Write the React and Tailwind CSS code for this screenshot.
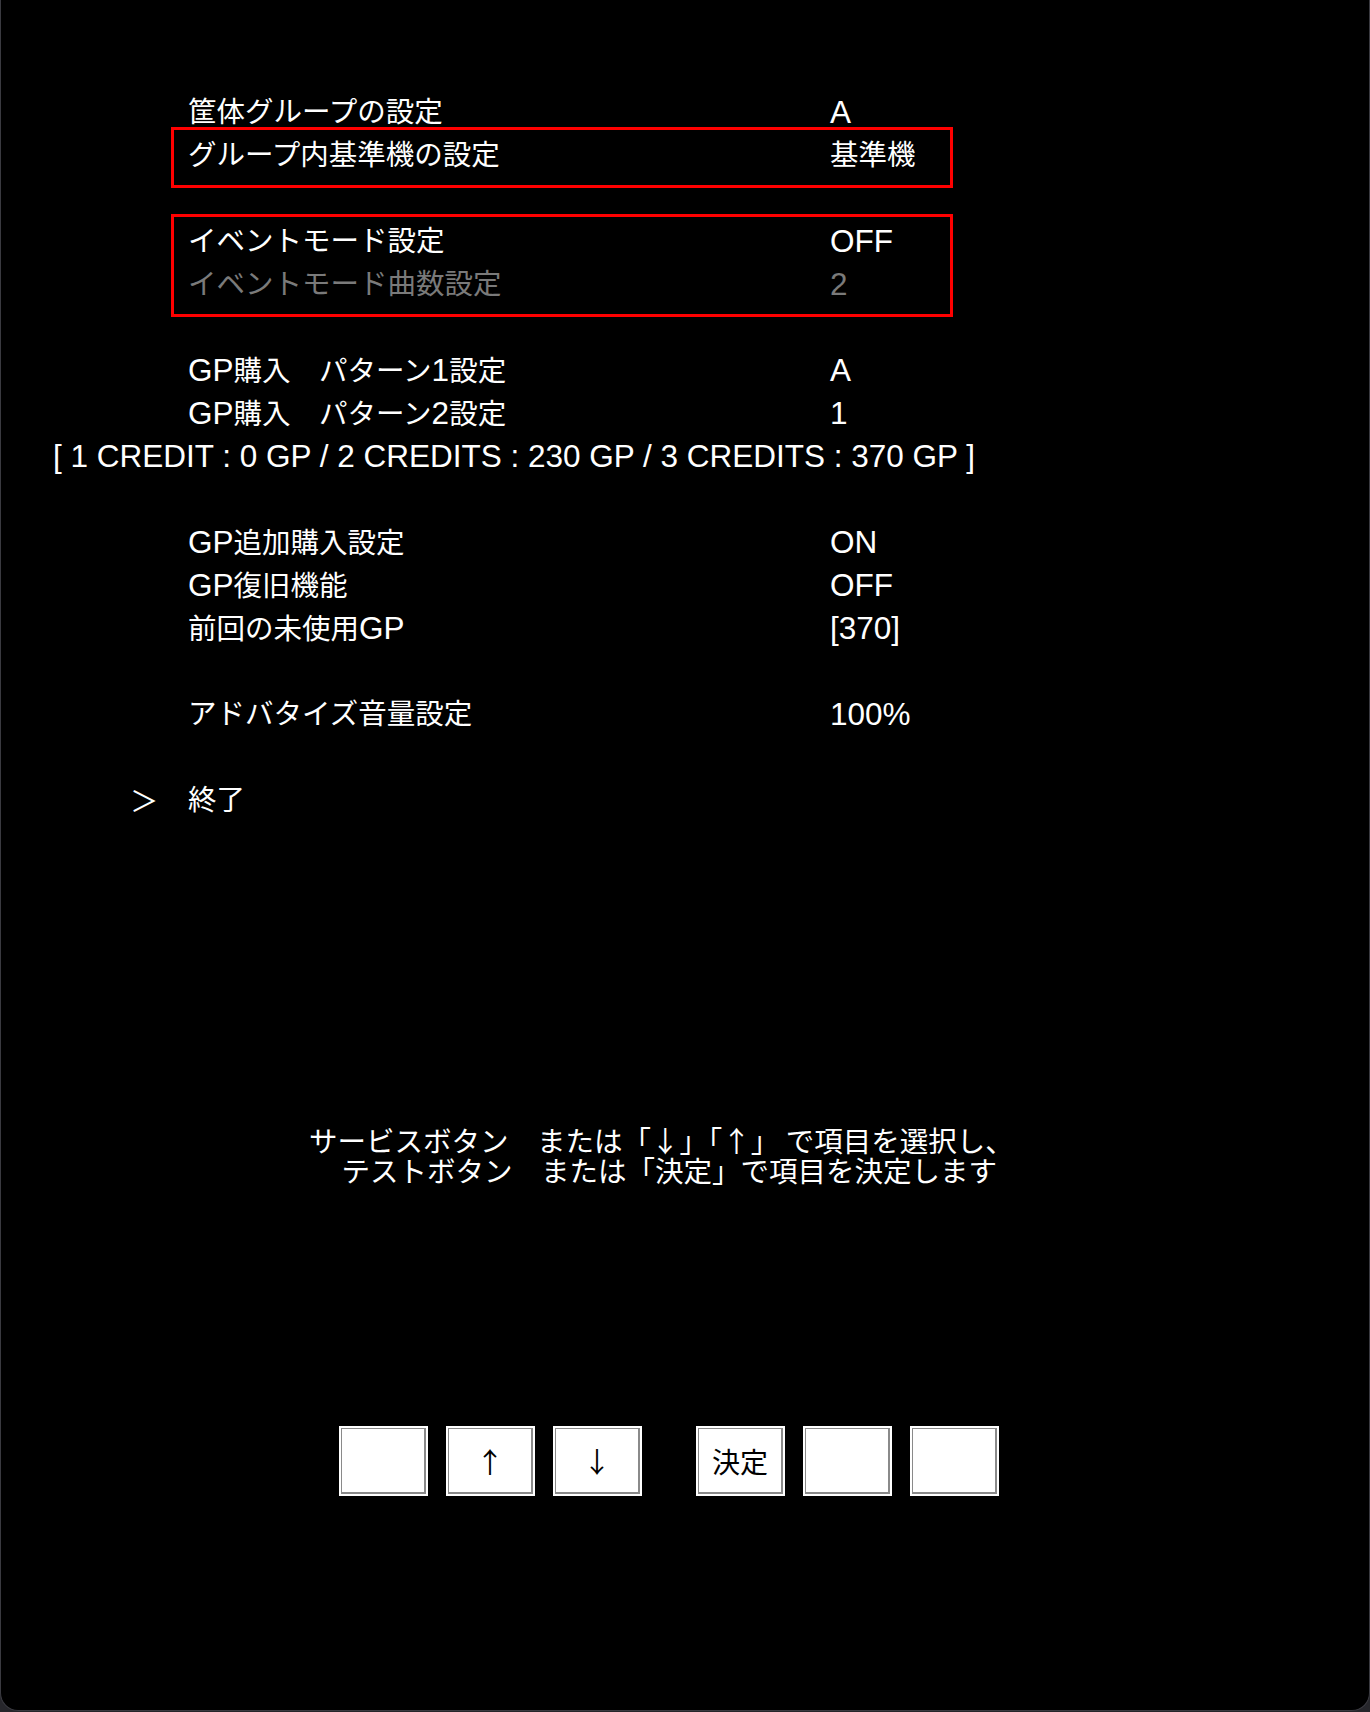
import React from "react";

const FONT = { fontFamily: '"Liberation Sans", "Noto Sans CJK JP", sans-serif' };
const CJK = { fontFamily: '"Noto Sans CJK JP", "Liberation Sans", sans-serif' };

function Mixed({ text }) {
  const parts = text.split(/([\x20-\x7e]+)/).filter((p) => p.length > 0);
  return parts.map((p, i) =>
    /^[\x20-\x7e]+$/.test(p) ? (
      <span key={i} className="text-[31.5px]">
        {p}
      </span>
    ) : (
      <span key={i}>{p}</span>
    )
  );
}

function Row({ label, value, dim }) {
  return (
    <div className={`flex h-[43px] items-center ${dim ? "text-[#7a7a7a]" : "text-white"}`}>
      <div className="w-[829px] pl-[187px] whitespace-pre">
        <Mixed text={label} />
      </div>
      <div className="whitespace-pre">
        <Mixed text={value} />
      </div>
    </div>
  );
}

function Blank() {
  return <div className="h-[43px]" />;
}

function Boxed({ children, top, bottom }) {
  return (
    <div className="relative">
      <div
        className={`pointer-events-none absolute left-[170px] w-[782px] border-[3px] border-[#ff0000] ${top} ${bottom}`}
      />
      {children}
    </div>
  );
}

function Key({ children, extra = "" }) {
  return (
    <div className={`h-[70px] w-[89px] bg-white p-[2px] ${extra}`}>
      <div
        className="flex h-full w-full items-center justify-center border border-[#8a8a8a] border-b-2 border-r-2 text-[28px] text-black"
        style={CJK}
      >
        {children}
      </div>
    </div>
  );
}

export default function App() {
  return (
    <div className="h-[1712px] w-[1370px] bg-[#26262b]" style={FONT}>
      <div className="h-[1711px] w-full overflow-hidden rounded-b-[18px] border-x border-b border-[#3a3a40] bg-black text-[28.5px] leading-none">
        <div className="pt-[91px]">
          <Row label="筐体グループの設定" value="A" />
          <Boxed top="-top-[7px]" bottom="-bottom-[11px]">
            <Row label="グループ内基準機の設定" value="基準機" />
          </Boxed>
          <Blank />
          <Boxed top="-top-[6px]" bottom="-bottom-[11px]">
            <Row label="イベントモード設定" value="OFF" />
            <Row label="イベントモード曲数設定" value="2" dim />
          </Boxed>
          <Blank />
          <Row label="GP購入　パターン1設定" value="A" />
          <Row label="GP購入　パターン2設定" value="1" />
          <div className="flex h-[43px] items-center pl-[52px] text-[31.5px] text-white whitespace-pre">
            [ 1 CREDIT : 0 GP / 2 CREDITS : 230 GP / 3 CREDITS : 370 GP ]
          </div>
          <Blank />
          <Row label="GP追加購入設定" value="ON" />
          <Row label="GP復旧機能" value="OFF" />
          <Row label="前回の未使用GP" value="[370]" />
          <Blank />
          <Row label="アドバタイズ音量設定" value="100%" />
          <Blank />
          <div className="flex h-[43px] items-center text-white">
            <div className="w-[187px] pl-[129px]" style={CJK}>＞</div>
            <div>終了</div>
          </div>
        </div>

        <div className="mt-[303px] pl-[308px] text-[28.5px] leading-[30px] text-white whitespace-pre" style={CJK}>
          <div>サービスボタン　または「↓」「↑」 で項目を選択し、</div>
          <div className="pl-[4px]">　テストボタン　または「決定」で項目を決定します</div>
        </div>

        <div className="mt-[241px] flex gap-[18px] pl-[338px]">
          <Key />
          <Key>↑</Key>
          <Key>↓</Key>
          <Key extra="ml-[36px]">決定</Key>
          <Key />
          <Key />
        </div>
      </div>
    </div>
  );
}
